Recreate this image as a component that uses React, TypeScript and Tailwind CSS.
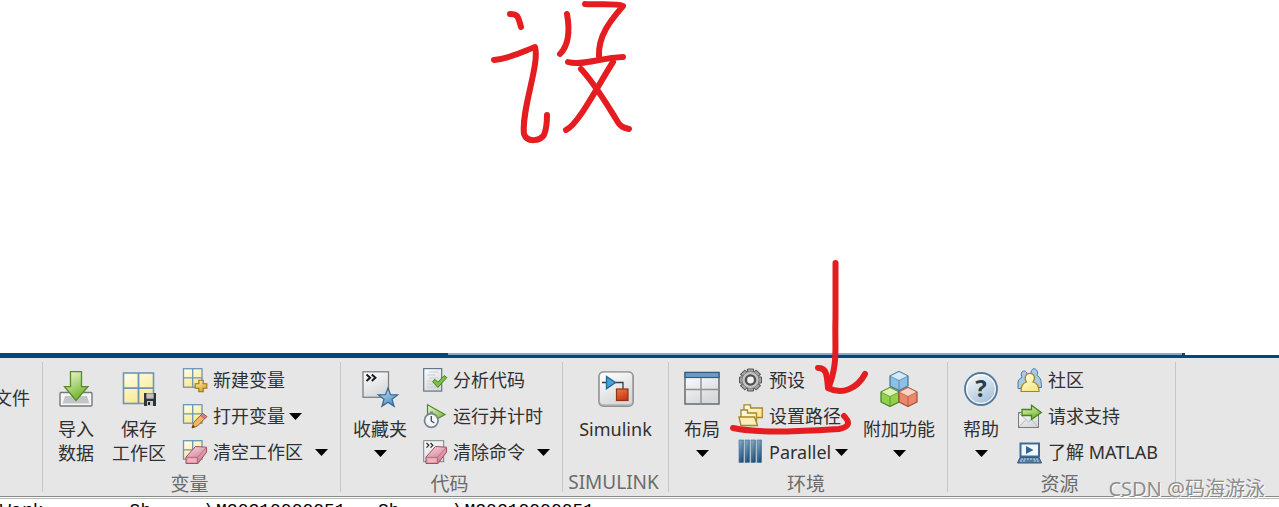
import type { ReactNode } from 'react';

// ─── Icons ─────────────────────────────────────────────────────────────────

function Big({ children }: { children: ReactNode }) {
  return (
    <svg viewBox="0 0 36 36" className="h-9 w-9 shrink-0 overflow-visible" fill="none" aria-hidden="true">
      {children}
    </svg>
  );
}

function Small({ children }: { children: ReactNode }) {
  return (
    <svg viewBox="0 0 24 24" className="h-6 w-6 shrink-0 overflow-visible" fill="none" aria-hidden="true">
      {children}
    </svg>
  );
}

/** Shared gradients, referenced by id from every icon. */
function Gradients() {
  const list = [
    ['g-green', '#f4fbd8', '#6fb52c'],
    ['g-yellow', '#fffef0', '#f7e98c'],
    ['g-gold', '#fff3b8', '#dda72c'],
    ['g-grey', '#ffffff', '#d6d8da'],
    ['g-blue', '#c9e4f6', '#5793c4'],
    ['g-steel', '#8db6d2', '#23527c'],
    ['g-red', '#f0784c', '#c83a12'],
    ['g-pink', '#f7d3dc', '#cf7d92'],
    ['g-help', '#ffffff', '#a9c3d9'],
  ];
  return (
    <svg width="0" height="0" className="absolute" aria-hidden="true">
      <defs>
        {list.map(([id, from, to]) => (
          <linearGradient key={id} id={id} x1="0" y1="0" x2="0.5" y2="1">
            <stop offset="0" stopColor={from} />
            <stop offset="1" stopColor={to} />
          </linearGradient>
        ))}
      </defs>
    </svg>
  );
}

function ImportIcon() {
  return (
    <Big>
      <rect x="2" y="21.5" width="32" height="13.5" rx="1" fill="#f6f6f6" stroke="#75797c" strokeWidth="1.4" />
      <path d="M7 25h22l2.500 7.500h-27z" fill="#c2c5c7" />
      <path d="M12.500 .7h11v15H30L18 29.500 6.500 15.700h6z" fill="url(#g-green)" stroke="#568a2a" strokeWidth="1.3" />
    </Big>
  );
}

function SaveIcon() {
  return (
    <Big>
      <rect x="2.5" y="2" width="30" height="30.5" fill="url(#g-yellow)" stroke="#6d95b7" strokeWidth="1.6" />
      <path d="M17.5 2v30M2 17.2h31" stroke="#6d95b7" strokeWidth="1.8" />
      <rect x="23" y="22" width="12" height="13" fill="#30343a" />
      <path d="M25.5 22.5h7v5h-7z" fill="#f0f0f0" />
      <path d="M26 24h6M26 26h6" stroke="#777" strokeWidth=".8" />
      <path d="M26 30h6v5h-6z" fill="#c9ccd0" />
      <path d="M27 31h2v3h-2z" fill="#222" />
    </Big>
  );
}

function GridBase() {
  return (
    <>
      <rect x="1.5" y=".7" width="18.5" height="18.5" fill="url(#g-yellow)" stroke="#6d95b7" strokeWidth="1.3" />
      <path d="M10.7 .5v19M1 9.8h19.5" stroke="#6d95b7" strokeWidth="1.3" />
    </>
  );
}

function EraserShape() {
  return (
    <>
      <path d="M4 17 13.5 6.5 24.5 7.2v5L16 23.5H4z" fill="url(#g-pink)" stroke="#a14e65" />
      <path d="M4 17.3h11.5l9-9.8M15.5 17.3l.3 6" stroke="#b76479" strokeWidth=".9" />
      <path d="M5.5 18.5h9v4h-9z" fill="#eeb3c0" />
    </>
  );
}

function NewVariableIcon() {
  return (
    <Small>
      <GridBase />
      <path
        d="M16.8 12.2h4.4v3.6h3.6v4.4h-3.6v3.6h-4.4v-3.6h-3.6v-4.4h3.6z"
        fill="url(#g-gold)"
        stroke="#9c7018"
        strokeWidth="1.1"
      />
    </Small>
  );
}

function OpenVariableIcon() {
  return (
    <Small>
      <GridBase />
      <path d="m20.500 9.500 4.300 3L15.500 22 10 24l1.500-5.500z" fill="#f2b565" stroke="#9a6422" />
      <path d="m20.500 9.500 4.300 3-2 2.200-4.200-3.200z" fill="#dc8393" stroke="#9c4d5e" strokeWidth=".8" />
      <path d="m10 24 1-3 2 1.8z" fill="#4a3a24" />
    </Small>
  );
}

function ClearWorkspaceIcon() {
  return (
    <Small>
      <GridBase />
      <EraserShape />
    </Small>
  );
}

function FavoritesIcon() {
  return (
    <Big>
      <rect x="1" y=".8" width="25.5" height="25.5" fill="url(#g-grey)" stroke="#7d8185" strokeWidth="1.3" />
      <path d="m4.5 3.6 3.6 3.2-3.6 3.2M9.8 3.6l3.600 3.200L9.800 10" stroke="#1a1a1a" strokeWidth="2" />
      <path
        d="m26 17 2.5 6.7 7.2.2-5.7 4.4 2.1 7L26 31.2l-6.1 4.1 2.1-7-5.7-4.4 7.2-.2z"
        fill="url(#g-blue)"
        stroke="#2f6796"
        strokeWidth="1.2"
      />
    </Big>
  );
}

function AnalyzeIcon() {
  return (
    <Small>
      <rect x="1.7" y=".6" width="18" height="22.5" fill="url(#g-grey)" stroke="#62778a" strokeWidth="1.2" />
      <path d="M7 4h9M5 7h8M7 10h9M5 13h5M5 16h6M5 19h9" stroke="#c8cdd2" strokeWidth="1" />
      <path d="m10.5 13.5 2.5-2.2 2.7 2.900 6.600-6.700 2.500 2.100-9 9.800z" fill="#7cc242" stroke="#467d20" />
    </Small>
  );
}

function RunTimeIcon() {
  return (
    <Small>
      <path d="M5.5.8v19.5L23 10.5z" fill="url(#g-green)" stroke="#4f8a27" strokeWidth="1.2" />
      <path d="M8 7.5h3v2H8z" fill="#788795" />
      <circle cx="9.3" cy="16.5" r="6.8" fill="#f3f5f7" stroke="#788795" strokeWidth="1.8" />
      <path d="M9.3 12v5l3 2" stroke="#3c4a56" strokeWidth="1.3" />
    </Small>
  );
}

function ClearCommandIcon() {
  return (
    <Small>
      <rect x="1.7" y=".7" width="20" height="21" fill="url(#g-grey)" stroke="#7d8185" />
      <path d="m4.5 3 2.3 2.3-2.3 2.3M8.5 3l2.3 2.3-2.3 2.3" stroke="#222" strokeWidth="1.2" />
      <EraserShape />
    </Small>
  );
}

function SimulinkIcon() {
  return (
    <Big>
      <rect x=".8" y=".8" width="34.5" height="34.5" rx="4.5" fill="#b4b4b4" stroke="#919191" strokeWidth="1.2" />
      <rect x="2" y="1.8" width="32" height="31.5" rx="3.5" fill="url(#g-grey)" />
      <path d="M4 11.5h4M17 11.5h8V18" stroke="#3c3c3c" strokeWidth="1.3" />
      <path d="M8.5 5.500v12.300l9-6.300z" fill="#45a2d9" stroke="#1d6797" strokeWidth="1.3" />
      <rect x="18.5" y="18" width="11.5" height="11.5" fill="url(#g-red)" stroke="#8f3413" strokeWidth="1.2" />
    </Big>
  );
}

function LayoutIcon() {
  return (
    <Big>
      <rect x="1" y="1.5" width="34" height="31.5" fill="url(#g-grey)" stroke="#5e6367" strokeWidth="1.4" />
      <path d="M17 7v26M1 18.5h34" stroke="#8d9194" strokeWidth="1.4" />
      <rect x="1" y="1.5" width="34" height="5" fill="#6c9cc6" stroke="#325e86" strokeWidth="1.2" />
    </Big>
  );
}

const TEETH = [0, 45, 90, 135, 180, 225, 270, 315];

function GearIcon() {
  return (
    <Small>
      {TEETH.map((a) => (
        <path key={a} d="M9.5 4.500V1h6v3.500z" fill="#a5a5a5" stroke="#555" transform={`rotate(${a} 12.5 12)`} />
      ))}
      <circle cx="12.5" cy="12" r="8.5" fill="#c4c4c4" stroke="#777" strokeWidth=".8" />
      <circle cx="12.5" cy="12" r="4.6" fill="#f2f2f2" stroke="#505050" strokeWidth="2.4" />
    </Small>
  );
}

function FoldersIcon() {
  return (
    <Small>
      <path d="M6 .8h6.5V4h11.800v9.500H6z" fill="url(#g-yellow)" stroke="#a8842f" strokeWidth="1.3" />
      <path d="M3 6h6.5v3h9v12H3z" fill="url(#g-yellow)" stroke="#a8842f" strokeWidth="1.3" />
      <path d="M1 13h15.5l3 8.5H3z" fill="#fbf1b8" stroke="#a8842f" strokeWidth="1.3" />
    </Small>
  );
}

function ParallelIcon() {
  return (
    <Small>
      {[1, 7, 13, 19].map((x) => (
        <rect key={x} x={x} y="0" width="4.5" height="22.5" fill="url(#g-steel)" stroke="#426d91" strokeWidth=".6" />
      ))}
    </Small>
  );
}

interface CubeProps {
  x: number;
  y: number;
  top: string;
  side: string;
  line: string;
}

function Cube({ x, y, top, side, line }: CubeProps) {
  return (
    <g transform={`translate(${x} ${y})`} stroke={line} strokeLinejoin="round">
      <path d="M0-9.500 9-5v10L0 9.500-9 5V-5z" fill={side} strokeWidth="1.2" />
      <path d="M0-9.500 9-5 0-.5-9-5z" fill={top} strokeWidth=".6" />
      <path d="M0-.5v10" strokeWidth=".7" />
    </g>
  );
}

function AddOnsIcon() {
  return (
    <Big>
      <Cube x={18} y={10} top="#d5eaf8" side="#8fbfe2" line="#3d759f" />
      <Cube x={9} y={26} top="#dcf4b5" side="#94cf4d" line="#477f22" />
      <Cube x={27} y={26} top="#fbd3c5" side="#e8896c" line="#a44b32" />
    </Big>
  );
}

function HelpIcon() {
  return (
    <Big>
      <circle cx="18" cy="18" r="16" fill="url(#g-help)" stroke="#53789a" strokeWidth="1.8" />
      <circle cx="18" cy="18" r="14.4" stroke="#fff" strokeWidth="1" />
      <text x="18" y="26" textAnchor="middle" fontSize="24" fontWeight="700" fill="#2d3c49" fontFamily="Open Sans, sans-serif">
        ?
      </text>
    </Big>
  );
}

function CommunityIcon() {
  return (
    <Small>
      <g fill="#a6cbe6" stroke="#4a7ba3">
        <path d="M1 20.500V15c0-3 1.500-4.500 4-5.500C3.500 6 4.500 3 7 3s4 3 3 6.500c3 1 4 3 4 11z" />
        <path d="M11 17c0-6 1-8 4-9-2-3-.5-7.300 2-7.300S21.500 4 20 7.500c3 1.500 4.500 4 4.500 12H20z" />
      </g>
      <path
        d="M4 23.500c0-6 2-8.500 5.500-9.500-3-4.500-.5-8.700 3.500-8.700s6 4.200 3 8.700c4 1 6 3.500 6 9.500z"
        fill="url(#g-yellow)"
        stroke="#aa7f1f"
        strokeWidth="1.2"
      />
    </Small>
  );
}

function SupportIcon() {
  return (
    <Small>
      <rect x="1.5" y="8.5" width="20" height="15" fill="url(#g-grey)" stroke="#777c80" />
      <path d="m2 23 7-7.5M21 23l-6.5-7.5M2 9l9.5 9L21 9" stroke="#b5b9bc" />
      <path d="M5 5.500h9.500V1.200l9.800 7.300-9.800 7v-4H5z" fill="url(#g-green)" stroke="#42851f" strokeWidth="1.3" />
    </Small>
  );
}

function LaptopIcon() {
  return (
    <Small>
      <rect x="3.5" y="3.5" width="18.5" height="13" fill="#f2f7fb" stroke="#3f6a93" strokeWidth="2" />
      <path d="m9 6 7.5 4L9 14z" fill="#2f669a" />
      <path d="M3 17.5h19l2.500 5.500h-24z" fill="#547da4" stroke="#2f587f" />
      <path d="M4 19h17M3 21h5m9 0h5" stroke="#c5d8e9" strokeDasharray="2 1" />
    </Small>
  );
}

// ─── Toolstrip parts ───────────────────────────────────────────────────────

function Caret() {
  return (
    <svg viewBox="0 0 13 7" className="h-[7px] w-[13px] shrink-0 fill-black" aria-hidden="true">
      <path d="M0 0h13L6.5 7z" />
    </svg>
  );
}

interface ToolProps {
  icon: ReactNode;
  label: string;
  menu?: boolean;
}

function LargeTool({ icon, label, menu, width }: ToolProps & { width: string }) {
  return (
    <button type="button" className={`flex flex-col items-center pt-[9px] ${width}`}>
      {icon}
      <span className="mt-2.5 whitespace-pre text-center leading-6">{label}</span>
      {menu && (
        <span className="flex h-6 items-center">
          <Caret />
        </span>
      )}
    </button>
  );
}

function SmallTool({ icon, label, menu, gap = 'gap-1' }: ToolProps & { gap?: string }) {
  return (
    <button type="button" className={`flex h-9 items-center whitespace-nowrap ${gap}`}>
      <span className="flex items-center gap-[7px]">
        {icon}
        {label}
      </span>
      {menu && <Caret />}
    </button>
  );
}

function Group({ title, width, children }: { title: string; width: string; children: ReactNode }) {
  return (
    <section className={`my-1 flex shrink-0 flex-col border-l border-[#c6c6c6] ${width}`} aria-label={title}>
      <div className="flex h-[108px]">{children}</div>
      <h2 className="-mb-1 pr-1 text-center text-[19px] leading-7 text-[#6b6b6b]">{title}</h2>
    </section>
  );
}

function Stack({ children }: { children: ReactNode }) {
  return <div className="ml-[3px] flex flex-col items-start">{children}</div>;
}

// ─── Pen marks ─────────────────────────────────────────────────────────────

function HandwrittenMark() {
  return (
    <svg
      viewBox="0 0 150 145"
      className="ml-[486px] h-[145px] w-[150px] fill-none stroke-[#e51c20] stroke-[6] [stroke-linecap:round] [stroke-linejoin:round]"
      aria-hidden="true"
    >
      <path d="M24 14c7 0 8 1 11 13" />
      <path d="M8 60c18-2 30-9 41-13 5 17-14 63-11 87 3 9 16 7 20 1 2-5 3-11 3-20" />
      <path d="M81 14q5 28-7 40" />
      <path d="M99 4c13 1 31-1 38 2-10 12-25 28-24 50" />
      <path d="M82 62c13 4 32-4 55-5" />
      <path d="M127 62c-12 18-34 62-47 68" />
      <path d="M95 69c14 15 25 34 35 50 4 8 8 9 13 10" />
    </svg>
  );
}

function ArrowMark() {
  return (
    <svg
      viewBox="0 0 140 180"
      className="pointer-events-none absolute left-[728px] top-[257px] h-[180px] w-[140px] fill-none stroke-[#e51c20] stroke-[6] [stroke-linecap:round] [stroke-linejoin:round]"
      aria-hidden="true"
    >
      <path d="M107.5 6v55c-1 30 3 44-7 70" />
      <path d="M90 111c9-1 9 9 10 20 14 7 29 1 37-14" />
      <path d="M5 171c30 6 73 3 106 1 11-2 11-7 5-13" />
    </svg>
  );
}

// ─── Page ──────────────────────────────────────────────────────────────────

const OUTPUT_LINE = 'Work        Sh     \\M20210000051   Sh     \\M20210000051';

export default function App() {
  return (
    <main className="relative flex h-screen flex-col overflow-hidden bg-white font-['Noto_Sans','Noto_Sans_CJK_SC',sans-serif] text-[18px] text-[#303030]">
      <Gradients />
      <div className="h-[353px] shrink-0">
        <HandwrittenMark />
      </div>

      <div className="flex h-[5px] shrink-0 bg-[#064679]">
        <div className="w-[448px]" />
        <div className="h-0.5 w-[734px] bg-[#8aa9c4]" />
        <div className="w-[3px]" />
        <div className="h-0.5 flex-1 bg-white" />
      </div>

      <div className="flex h-[138px] shrink-0 bg-[#e6e6e6]">
        <div className="flex w-[42px] shrink-0 justify-end overflow-hidden pr-3 pt-7 leading-6">
          <span className="whitespace-nowrap">文件</span>
        </div>

        <Group title="变量" width="w-[298px]">
          <div className="w-2.5" />
          <LargeTool icon={<ImportIcon />} label={'导入\n数据'} width="w-[46px]" />
          <LargeTool icon={<SaveIcon />} label={'保存\n工作区'} width="w-20" />
          <Stack>
            <SmallTool icon={<NewVariableIcon />} label="新建变量" />
            <SmallTool icon={<OpenVariableIcon />} label="打开变量" menu />
            <SmallTool icon={<ClearWorkspaceIcon />} label="清空工作区" menu gap="gap-3" />
          </Stack>
        </Group>

        <Group title="代码" width="w-[222px]">
          <LargeTool icon={<FavoritesIcon />} label="收藏夹" menu width="w-[78px]" />
          <Stack>
            <SmallTool icon={<AnalyzeIcon />} label="分析代码" />
            <SmallTool icon={<RunTimeIcon />} label="运行并计时" />
            <SmallTool icon={<ClearCommandIcon />} label="清除命令" menu gap="gap-3" />
          </Stack>
        </Group>

        <Group title="SIMULINK" width="w-[106px]">
          <LargeTool icon={<SimulinkIcon />} label="Simulink" width="w-full" />
        </Group>

        <Group title="环境" width="w-[279px]">
          <LargeTool icon={<LayoutIcon />} label="布局" menu width="w-[66px]" />
          <Stack>
            <SmallTool icon={<GearIcon />} label="预设" />
            <SmallTool icon={<FoldersIcon />} label="设置路径" />
            <SmallTool icon={<ParallelIcon />} label="Parallel" menu />
          </Stack>
          <div className="flex-1" />
          <LargeTool icon={<AddOnsIcon />} label="附加功能" menu width="w-24" />
        </Group>

        <Group title="资源" width="w-[228px]">
          <LargeTool icon={<HelpIcon />} label="帮助" menu width="w-[66px]" />
          <Stack>
            <SmallTool icon={<CommunityIcon />} label="社区" />
            <SmallTool icon={<SupportIcon />} label="请求支持" />
            <SmallTool icon={<LaptopIcon />} label="了解 MATLAB" />
          </Stack>
        </Group>

        <div className="my-1 flex-1 border-l border-[#c6c6c6]" />
      </div>

      <div className="h-[3px] shrink-0 border-y border-t-[#858a85] border-b-[#b4bab4] bg-white" />
      <pre className="min-h-0 flex-1 overflow-hidden font-['Liberation_Mono',monospace] text-[18px] leading-6 text-black">
        {OUTPUT_LINE}
      </pre>

      <ArrowMark />
      <p className="absolute right-[14px] top-[477px] whitespace-nowrap text-[20px] leading-6 text-[#8d8d8d] [text-shadow:1px_1px_0_#ffffff]">
        CSDN @码海游泳
      </p>
    </main>
  );
}
